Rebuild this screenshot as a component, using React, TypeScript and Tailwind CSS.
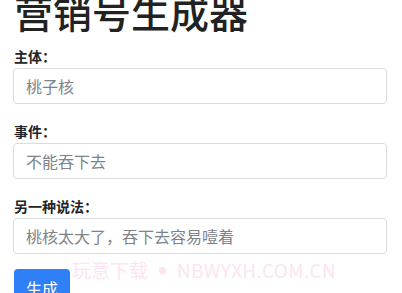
import React from "react";

export default function App() {
  const font = { fontFamily: '"Noto Sans CJK SC", "Noto Sans", sans-serif' };
  return (
    <div className="relative w-[402px] h-[293px] overflow-hidden bg-white text-[#212529]" style={font}>
      <div className="px-[13px]">
        <h1 className="text-[39px] leading-[46px] font-medium text-[#222] mt-[-12px] ml-[1px]">营销号生成器</h1>
        <div className="mt-[12px]">
          <label className="block text-[14px] leading-[21px] font-bold ml-[1px]">主体：</label>
          <input
            className="mt-[1px] block w-[374px] h-[36px] border border-[#d9dde1] rounded-[4px] px-[12px] text-[16px] outline-none placeholder:text-[#7d8389]"
            placeholder="桃子核"
          />
        </div>
        <div className="mt-[17px]">
          <label className="block text-[14px] leading-[21px] font-bold ml-[1px]">事件：</label>
          <input
            className="mt-[1px] block w-[374px] h-[36px] border border-[#d9dde1] rounded-[4px] px-[12px] text-[16px] outline-none placeholder:text-[#7d8389]"
            placeholder="不能吞下去"
          />
        </div>
        <div className="mt-[17px]">
          <label className="block text-[14px] leading-[21px] font-bold ml-[1px]">另一种说法：</label>
          <input
            className="mt-[1px] block w-[374px] h-[36px] border border-[#d9dde1] rounded-[4px] px-[12px] text-[16px] outline-none placeholder:text-[#7d8389]"
            placeholder="桃核太大了，吞下去容易噎着"
          />
        </div>
        <button className="mt-[15px] ml-[1px] h-[38px] px-[12px] rounded-[4px] bg-[#2f7ff6] text-white text-[16px] leading-[22px]">
          生成
        </button>
      </div>
      <div className="pointer-events-none absolute left-[72px] top-[256px] flex items-center gap-[11px] text-[19px] leading-[28px] text-[#fde4f2] whitespace-nowrap">
        <span>玩意下载</span>
        <span className="inline-block w-[7px] h-[7px] rounded-full bg-[#fde4f2]" />
        <span className="tracking-[0.3px]">NBWYXH.COM.CN</span>
      </div>
    </div>
  );
}
